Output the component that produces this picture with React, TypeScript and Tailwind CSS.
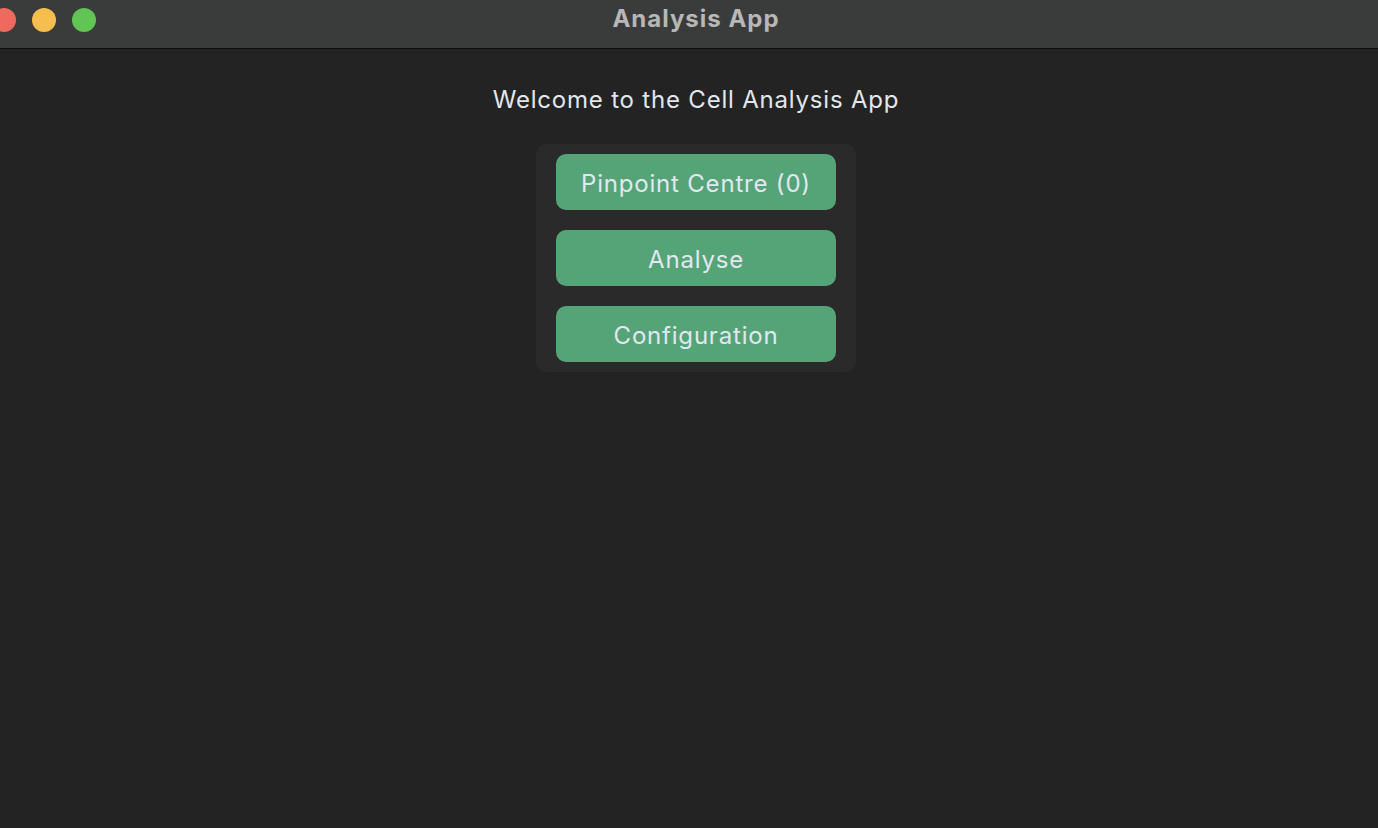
import React from "react";

export default function App() {
  const buttons = ["Pinpoint Centre (0)", "Analyse", "Configuration"];
  return (
    <div className="w-[1378px] h-[828px] overflow-hidden bg-[#232323] flex flex-col" style={{ fontFamily: "Inter, 'Noto Sans', sans-serif" }}>
      <div className="relative h-[49px] shrink-0 bg-[#3a3b3b] border-b border-[#0e0e0e] flex items-center justify-center pl-[14px]">
        <div className="absolute left-[-8px] top-[8px] flex gap-4">
          <div className="w-6 h-6 rounded-full bg-[#ee6a5f]" />
          <div className="w-6 h-6 rounded-full bg-[#f5be4f]" />
          <div className="w-6 h-6 rounded-full bg-[#61c454]" />
        </div>
        <div className="text-[24px] font-bold text-[#b7b7b7] leading-none -mt-[10px] tracking-[1px]">Analysis App</div>
      </div>
      <div className="flex flex-col items-center pl-[14px]">
        <div className="mt-[37px] text-[24px] leading-[28px] text-[#e2e6ed] tracking-[0.8px]">Welcome to the Cell Analysis App</div>
        <div className="mt-[30px] w-[320px] rounded-[10px] bg-[#2a2a2a] px-5 py-[10px] flex flex-col gap-5">
          {buttons.map((b) => (
            <div key={b} className="h-[56px] pt-[3px] rounded-[10px] bg-[#55a477] flex items-center justify-center text-[24px] text-[#e2e8f0] tracking-[0.8px]">
              {b}
            </div>
          ))}
        </div>
      </div>
    </div>
  );
}
